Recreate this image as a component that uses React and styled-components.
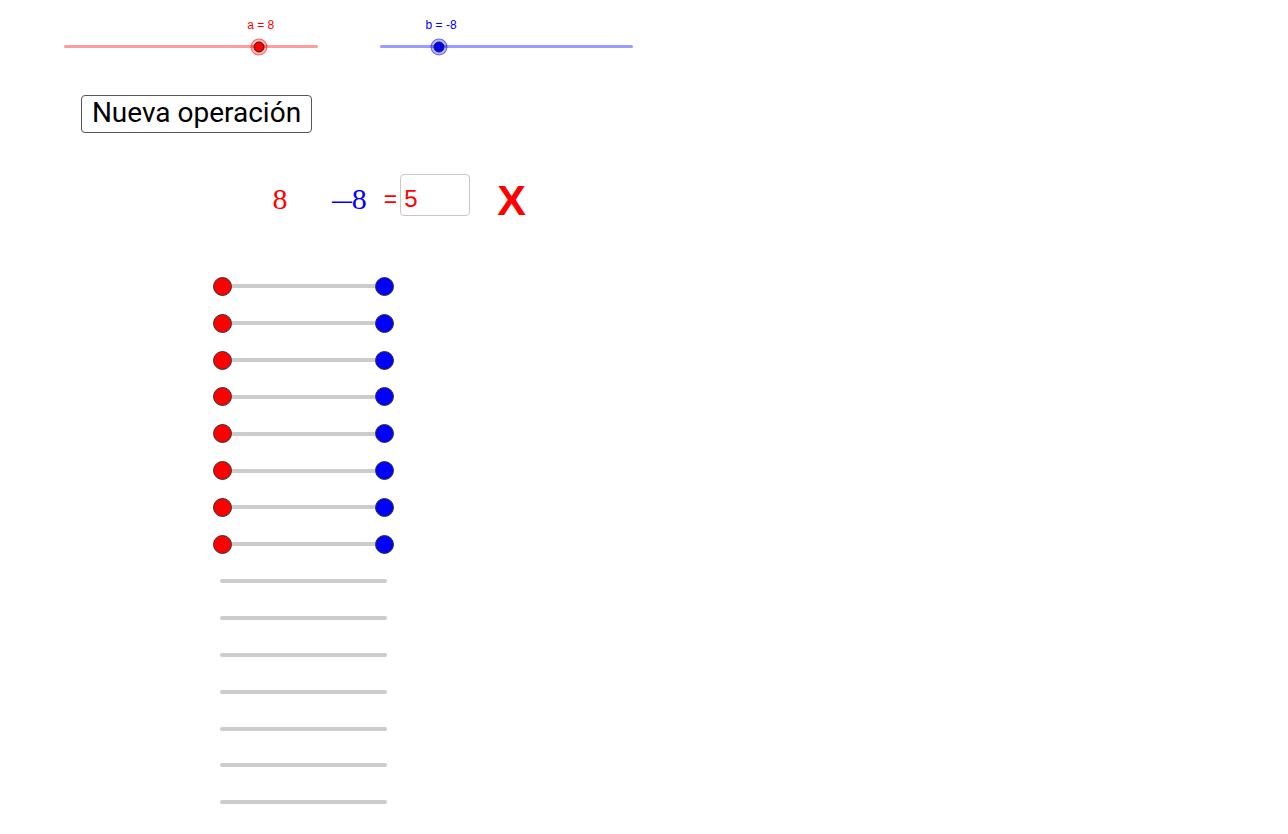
import React from 'react';
import styled, { createGlobalStyle } from 'styled-components';

const GlobalStyle = createGlobalStyle`
  html, body {
    margin: 0;
    padding: 0;
    background: #fff;
    font-family: "Liberation Sans", Arial, sans-serif;
  }
`;

const ROW_STEP = 36.857;

const sliders = [
  { name: 'a', value: 8, min: -15, max: 15, color: '#ff0000', track: '#ff9c9c', halo: 'rgba(255, 0, 0, 0.3)', ring: 'rgba(255, 0, 0, 0.45)', width: 254 },
  { name: 'b', value: -8, min: -15, max: 15, color: '#0000ff', track: '#9c9cff', halo: 'rgba(0, 0, 255, 0.3)', ring: 'rgba(0, 0, 255, 0.45)', width: 253 },
];

function Slider({ name, value, min, max, color, track, halo, ring, width }) {
  const pct = ((value - min) / (max - min)) * 100;
  return (
    <SliderBox $width={width}>
      <LabelLane>
        <SliderLabel $color={color} style={{ left: `${pct}%` }}>
          {name} = {value}
        </SliderLabel>
      </LabelLane>
      <Track $color={track}>
        <Knob $halo={halo} $ring={ring} style={{ left: `${pct}%` }}>
          <KnobDot $color={color} />
        </Knob>
      </Track>
    </SliderBox>
  );
}

export default function App() {
  const pairs = 8;
  const blanks = 7;
  return (
    <Page>
      <GlobalStyle />
      <SliderRow>
        {sliders.map((s) => (
          <Slider key={s.name} {...s} />
        ))}
      </SliderRow>

      <ButtonWrap>
        <NewButton type="button">Nueva operación</NewButton>
      </ButtonWrap>

      <Equation>
        <Term $color="#ff0000">8</Term>
        <Minus $color="#0000ff">−</Minus>
        <Term $color="#0000ff">8</Term>
        <Equals>=</Equals>
        <AnswerBox>5</AnswerBox>
        <Wrong>X</Wrong>
      </Equation>

      <Rows>
        {Array.from({ length: pairs }).map((_, i) => (
          <Row key={`p${i}`} $indent={212.5}>
            <Dot $color="#ff0000" />
            <Link />
            <Dot $color="#0000ff" />
          </Row>
        ))}
        {Array.from({ length: blanks }).map((_, i) => (
          <Row key={`b${i}`} $indent={220}>
            <EmptyBar />
          </Row>
        ))}
      </Rows>
    </Page>
  );
}

const Page = styled.div`
  width: 1288px;
  min-height: 834px;
  display: flex;
  flex-direction: column;
  align-items: flex-start;
`;

const SliderRow = styled.div`
  display: flex;
  gap: 62px;
  margin-top: 18px;
  padding-left: 64px;
`;

const SliderBox = styled.div`
  width: ${(p) => p.$width}px;
  display: flex;
  flex-direction: column;
`;

const LabelLane = styled.div`
  position: relative;
  height: 14px;
`;

const SliderLabel = styled.span`
  position: absolute;
  top: 0;
  transform: translateX(calc(-50% + 2px));
  white-space: nowrap;
  font-size: 12px;
  line-height: 14px;
  color: ${(p) => p.$color};
`;

const Track = styled.div`
  position: relative;
  margin-top: 13px;
  height: 3px;
  border-radius: 2px;
  background: ${(p) => p.$color};
`;

const Knob = styled.div`
  position: absolute;
  top: 50%;
  width: 17px;
  height: 17px;
  box-sizing: border-box;
  border-radius: 50%;
  border: 1px solid ${(p) => p.$ring};
  background: ${(p) => p.$halo};
  transform: translate(-50%, -50%);
  display: flex;
  align-items: center;
  justify-content: center;
`;

const KnobDot = styled.div`
  width: 11px;
  height: 11px;
  box-sizing: border-box;
  border-radius: 50%;
  border: 1px solid #222;
  background: ${(p) => p.$color};
`;

const ButtonWrap = styled.div`
  margin-top: 47px;
  margin-left: 81px;
`;

const NewButton = styled.button`
  width: 231px;
  height: 38px;
  box-sizing: border-box;
  padding: 0 0 3px;
  border: 1px solid #555;
  border-radius: 4px;
  background: #fff;
  color: #000;
  font-family: Roboto, "Liberation Sans", sans-serif;
  font-size: 28px;
  line-height: 33px;
  text-align: center;
  cursor: pointer;
`;

const Equation = styled.div`
  display: flex;
  align-items: flex-start;
  height: 42px;
  margin-top: 41px;
  padding-left: 272.5px;
`;

const Term = styled.span`
  margin-top: 10px;
  font-family: "Liberation Serif", "Times New Roman", serif;
  font-size: 30px;
  line-height: 30px;
  color: ${(p) => p.$color};
`;

const Minus = styled.span`
  display: inline-block;
  width: 22px;
  margin-top: 12.5px;
  margin-left: 42.3px;
  font-family: "Liberation Serif", "Times New Roman", serif;
  font-size: 30px;
  line-height: 30px;
  color: ${(p) => p.$color};
  transform: scaleX(1.45);
  transform-origin: left center;
`;

const Equals = styled.span`
  margin-top: 14px;
  margin-left: 17px;
  font-size: 23px;
  line-height: 23px;
  color: #ff0000;
`;

const AnswerBox = styled.div`
  width: 70px;
  height: 42px;
  box-sizing: border-box;
  margin-left: 3px;
  padding: 10px 0 0 3px;
  border: 1px solid #c8c8c8;
  border-radius: 4px;
  font-size: 24px;
  line-height: 28px;
  color: #ff0000;
`;

const Wrong = styled.span`
  margin-top: 4.6px;
  margin-left: 27px;
  font-size: 43px;
  line-height: 43px;
  font-weight: bold;
  color: #ff0000;
`;

const Rows = styled.div`
  display: flex;
  flex-direction: column;
  margin-top: 52px;
`;

const Row = styled.div`
  height: ${ROW_STEP}px;
  display: flex;
  align-items: center;
  padding-left: ${(p) => p.$indent}px;
`;

const Dot = styled.div`
  flex: none;
  width: 19px;
  height: 19px;
  box-sizing: border-box;
  border-radius: 50%;
  border: 1px solid #333;
  background: ${(p) => p.$color};
`;

const Link = styled.div`
  flex: none;
  width: 143px;
  height: 4px;
  background: #cccccc;
`;

const EmptyBar = styled.div`
  width: 167px;
  height: 4px;
  border-radius: 2px;
  background: #cccccc;
`;
